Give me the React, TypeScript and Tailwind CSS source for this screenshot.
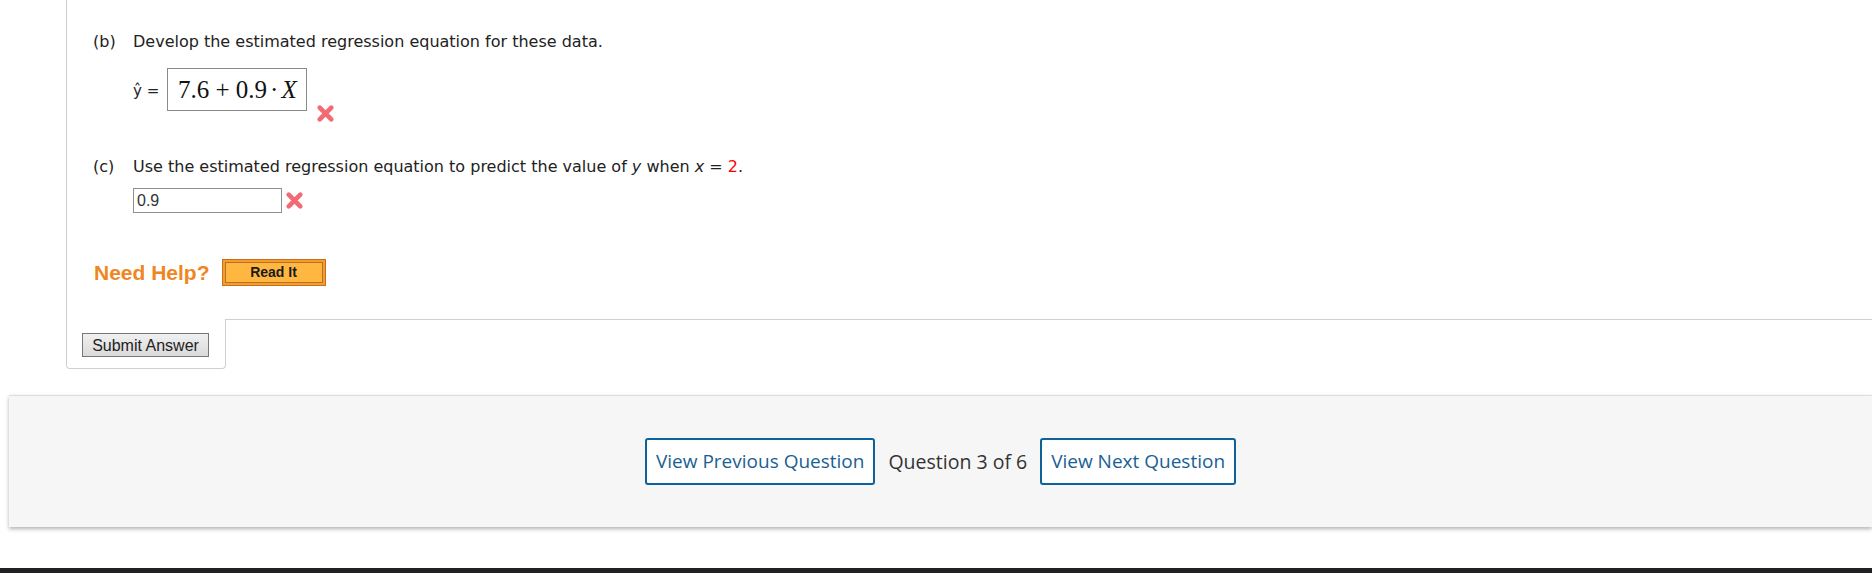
import React from "react";

function WrongMark({ className = "" }: { className?: string }) {
  return (
    <svg
      viewBox="0 0 18 18"
      className={className}
      width={19}
      height={19}
      aria-label="incorrect"
    >
      <path
        d="M3.5 3.5 L14.5 14.5 M14.5 3.5 L3.5 14.5"
        stroke="#f0505c"
        strokeWidth={4.4}
        strokeLinecap="round"
        fill="none"
        opacity={0.85}
      />
    </svg>
  );
}

export default function App() {
  return (
    <div className="relative h-[573px] w-[1872px] overflow-hidden bg-white font-['DejaVu_Sans',Verdana,sans-serif] text-[16px] text-[#222]">
      {/* question body */}
      <div className="ml-[66px] h-[319px] border-l border-[#cfcfcf] pl-[26px] pt-[32px]">
        <div className="flex h-[20px] items-center">
          <span className="w-[40px]">(b)</span>
          <span>Develop the estimated regression equation for these data.</span>
        </div>

        <div className="ml-[40px] mt-[16px] flex items-start">
          <span className="mt-[12px] w-[34px] whitespace-nowrap text-[15px]">
            y&#770; =
          </span>
          <div className="flex h-[43px] w-[140px] items-center border border-[#8a8a8a] pl-[10px] font-['Liberation_Serif',serif] text-[25px] text-[#111]">
            7.6 + 0.9<span className="mx-[3px]">·</span>
            <i>X</i>
          </div>
          <WrongMark className="ml-[9px] mt-[36px]" />
        </div>

        <div className="mt-[34px] flex h-[20px] items-center">
          <span className="w-[40px]">(c)</span>
          <span>
            Use the estimated regression equation to predict the value of{" "}
            <i>y</i> when <i>x</i> = <span className="text-[#ff0000]">2</span>.
          </span>
        </div>

        <div className="ml-[40px] mt-[11px] flex items-center">
          <div className="flex h-[25px] w-[149px] items-center border border-[#8f8f8f] pl-[3px] font-['Liberation_Sans',Arial,sans-serif] text-[16px] text-[#333]">
            0.9
          </div>
          <WrongMark className="ml-[3px]" />
        </div>

        <div className="mt-[44px] flex items-center">
          <span className="ml-[1px] font-['Liberation_Sans',Arial,sans-serif] text-[21px] font-bold text-[#f0861f]">
            Need Help?
          </span>
          <div className="ml-[12px] flex h-[27px] w-[104px] items-center justify-center border border-[#c96f1c] bg-[#f49c2c] p-[2px]">
            <div className="flex h-full w-full items-center justify-center border border-[#b8721f] bg-[#ffb741] font-['Liberation_Sans',Arial,sans-serif] text-[14px] font-bold text-[#1a1a1a]">
              Read It
            </div>
          </div>
        </div>
      </div>

      {/* submit tab */}
      <div className="ml-[66px] flex">
        <div className="h-[50px] w-[160px] rounded-b-[4px] border-x border-b border-[#cfcfcf] pl-[15px] pt-[14px]">
          <button className="h-[24px] w-[127px] border border-[#777] bg-gradient-to-b from-[#f0f0f0] to-[#dadada] font-['Liberation_Sans',Arial,sans-serif] text-[16px] text-[#222]">
            Submit Answer
          </button>
        </div>
        <div className="flex-1 border-t border-[#cfcfcf]" />
      </div>

      {/* navigation */}
      <div className="ml-[9px] mt-[26px] flex h-[132px] items-center justify-center gap-[13px] border-t border-[#dedede] bg-[#f6f6f6] font-['Open_Sans',sans-serif] shadow-[0_2px_4px_rgba(0,0,0,0.3)]">
        <button className="h-[47px] rounded-[3px] border-2 border-[#0e629a] bg-white px-[9px] text-[19px] text-[#1a5f94]">
          View Previous Question
        </button>
        <span className="text-[19.5px] text-[#333]">Question 3 of 6</span>
        <button className="h-[47px] rounded-[3px] border-2 border-[#0e629a] bg-white px-[9px] text-[19px] text-[#1a5f94]">
          View Next Question
        </button>
      </div>

      <div className="absolute bottom-0 left-0 h-[5px] w-full bg-[#1e2024]" />
    </div>
  );
}
